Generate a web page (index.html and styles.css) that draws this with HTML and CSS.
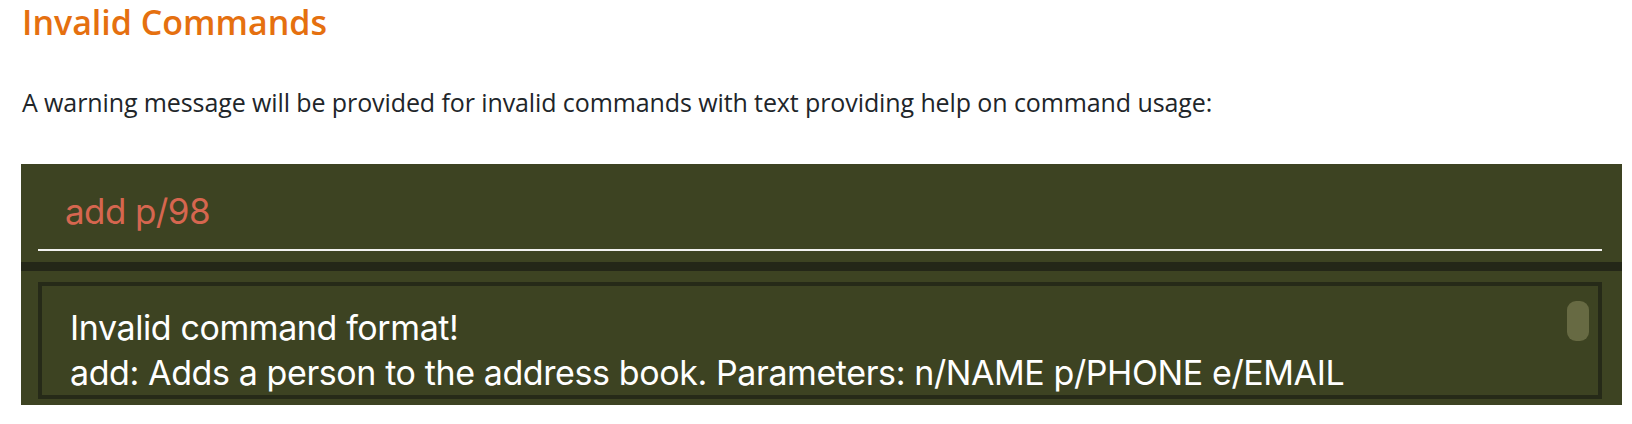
FILE: index.html
```html
<!DOCTYPE html>
<html lang="en">
<head>
<meta charset="utf-8">
<title>Invalid Commands</title>
<link rel="stylesheet" href="styles.css">
</head>
<body>
<main class="page">
  <h3 class="heading">Invalid Commands</h3>
  <p class="lead">A warning message will be provided for invalid commands with text providing help on command usage:</p>
  <div class="app">
    <div class="cmd">
      <div class="cmd-input">add p/98</div>
    </div>
    <div class="divider"></div>
    <div class="result">
      <div class="result-box">
        <div class="result-text">Invalid command format!<br>add: Adds a person to the address book. Parameters: n/NAME p/PHONE e/EMAIL</div>
        <div class="thumb"></div>
      </div>
    </div>
  </div>
</main>
</body>
</html>
```
FILE: styles.css
```css
html, body {
  margin: 0;
  padding: 0;
  background: #ffffff;
}
body {
  width: 1632px;
  height: 424px;
  overflow: hidden;
}
.page {
  padding: 0 10px 0 21px;
  font-family: "Open Sans", "Noto Sans", sans-serif;
}
.heading {
  margin: 0;
  padding: 1px 0 0 1px;
  font-size: 34px;
  font-weight: 600;
  line-height: 43px;
  color: #e5700f;
}
.lead {
  margin: 41px 0 0 0;
  padding-left: 1px;
  font-size: 25px;
  line-height: 34px;
  color: #212529;
  letter-spacing: -0.1px;
}
.app {
  margin-top: 45px;
  height: 241px;
  background: #3d4322;
  display: flex;
  flex-direction: column;
}
.cmd {
  height: 99px;
  padding: 0 20px 0 17px;
  box-sizing: border-box;
}
.cmd-input {
  height: 87px;
  box-sizing: border-box;
  padding: 30px 0 0 27px;
  font-family: Inter, "Noto Sans", sans-serif;
  font-size: 35px;
  line-height: 34px;
  letter-spacing: -0.6px;
  color: #d6664f;
  border-bottom: 2px solid #f2f2f0;
}
.divider {
  height: 9px;
  background: #242718;
}
.result {
  flex: 1;
  padding: 11px 20px 6px 17px;
  box-sizing: border-box;
  display: flex;
}
.result-box {
  flex: 1;
  position: relative;
  border: 4px solid #262a18;
  overflow: hidden;
  padding: 0 0 0 28px;
}
.result-text {
  font-family: Inter, "Noto Sans", sans-serif;
  font-size: 34px;
  line-height: 45px;
  letter-spacing: -0.4px;
  color: #ffffff;
  padding-top: 19px;
}
.thumb {
  position: absolute;
  top: 15px;
  right: 9px;
  width: 22px;
  height: 40px;
  border-radius: 9px;
  background: #676a43;
}
```
